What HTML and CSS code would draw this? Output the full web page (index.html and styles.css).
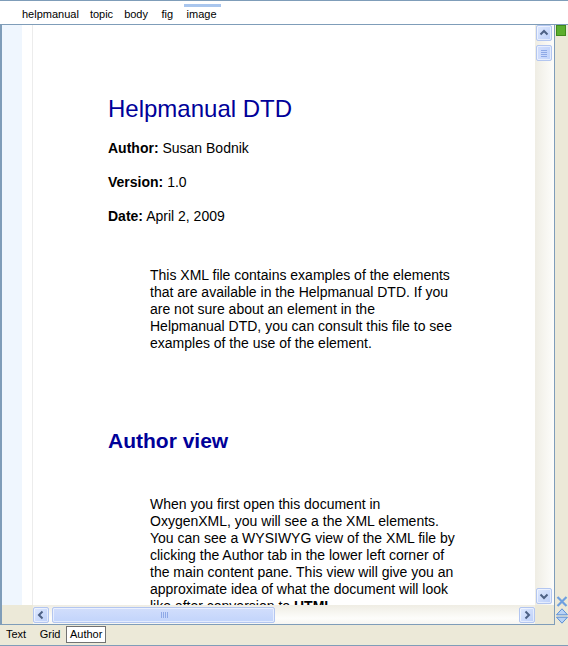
FILE: index.html
```
<!DOCTYPE html>
<html>
<head>
<meta charset="utf-8">
<link rel="stylesheet" href="styles.css">
</head>
<body>
<div class="app">
  <nav class="crumbs">
    <span class="crumb">helpmanual</span>
    <span class="crumb">topic</span>
    <span class="crumb">body</span>
    <span class="crumb shifted">fig</span>
    <span class="crumb shifted active">image</span>
  </nav>
  <div class="workspace">
    <div class="frame">
      <div class="viewport-row">
        <div class="gutter"></div>
        <div class="margin"></div>
        <div class="doc">
          <h1 class="title">Helpmanual DTD</h1>
          <p class="meta"><b>Author:</b> Susan Bodnik</p>
          <p class="meta"><b>Version:</b> 1.0</p>
          <p class="meta"><b>Date:</b> April 2, 2009</p>
          <p class="para first">This XML file contains examples of the elements<br>that are available in the Helpmanual DTD. If you<br>are not sure about an element in the<br>Helpmanual DTD, you can consult this file to see<br>examples of the use of the element.</p>
          <h2 class="section">Author view</h2>
          <p class="para second">When you first open this document in<br>OxygenXML, you will see a the XML elements.<br>You can see a WYSIWYG view of the XML file by<br>clicking the Author tab in the lower left corner of<br>the main content pane. This view will give you an<br>approximate idea of what the document will look<br>like after conversion to <b>HTML</b>.</p>
        </div>
        <div class="vscroll">
          <div class="sb-btn">
            <svg width="14" height="14" viewBox="0 0 14 14"><path d="M3.5 8.5 L7 5 L10.5 8.5" fill="none" stroke="#4d6185" stroke-width="2"/></svg>
          </div>
          <div class="vthumb">
            <svg width="14" height="14" viewBox="0 0 14 14"><path d="M4 4.5h6M4 6.5h6M4 8.5h6M4 10.5h6" stroke="#8fa9e6" stroke-width="1"/></svg>
          </div>
          <div class="vtrack-fill"></div>
          <div class="sb-btn">
            <svg width="14" height="14" viewBox="0 0 14 14"><path d="M3.5 5.5 L7 9 L10.5 5.5" fill="none" stroke="#4d6185" stroke-width="2"/></svg>
          </div>
        </div>
      </div>
      <div class="hscroll-row">
        <div class="corner-left"></div>
        <div class="hscroll">
          <div class="sb-btn">
            <svg width="14" height="14" viewBox="0 0 14 14"><path d="M8.5 3.5 L5 7 L8.5 10.5" fill="none" stroke="#4d6185" stroke-width="2"/></svg>
          </div>
          <div class="hthumb">
            <svg width="14" height="14" viewBox="0 0 14 14"><path d="M4.5 4v6M6.5 4v6M8.5 4v6M10.5 4v6" stroke="#8fa9e6" stroke-width="1"/></svg>
          </div>
          <div class="htrack-fill"></div>
          <div class="sb-btn">
            <svg width="14" height="14" viewBox="0 0 14 14"><path d="M5.5 3.5 L9 7 L5.5 10.5" fill="none" stroke="#4d6185" stroke-width="2"/></svg>
          </div>
        </div>
        <div class="corner"></div>
      </div>
    </div>
    <aside class="sidebar">
      <div class="status-ok"></div>
      <div class="side-tools">
        <svg class="close-icon" width="12" height="11" viewBox="0 0 12 11"><path d="M1.5 1 L10.5 10 M10.5 1 L1.5 10" stroke="#6fa0e0" stroke-width="2.2"/></svg>
        <svg class="nav-icon" width="12" height="16" viewBox="0 0 12 16"><path d="M6 0.8 L11.5 6.8 H0.5 Z" fill="#b9d3f5" stroke="#5b8fd6" stroke-width="1"/><path d="M6 15.2 L11.5 9.2 H0.5 Z" fill="#b9d3f5" stroke="#5b8fd6" stroke-width="1"/></svg>
      </div>
    </aside>
  </div>
  <div class="tabs">
    <span class="tab">Text</span>
    <span class="tab grid">Grid</span>
    <span class="tab active">Author</span>
  </div>
</div>
</body>
</html>
```

FILE: styles.css
```
* { box-sizing: border-box; }
html, body { margin: 0; padding: 0; }
body {
  width: 568px;
  height: 646px;
  overflow: hidden;
  background: #ece9d8;
  font-family: "Liberation Sans", Arial, sans-serif;
}
.app {
  width: 568px;
  height: 646px;
  display: flex;
  flex-direction: column;
}

/* breadcrumb bar */
.crumbs {
  height: 25px;
  flex: none;
  background: #fff;
  border-top: 1px solid #7f9db9;
  border-bottom: 1px solid #7f9db9;
  display: flex;
  align-items: flex-start;
  gap: 11px;
  padding-left: 22px;
  font-size: 11px;
  line-height: 13px;
  color: #000;
}
.crumb {
  position: relative;
  padding-top: 7px;
}
.crumb.shifted { margin-left: 2.5px; }
.crumb.active::before {
  content: "";
  position: absolute;
  top: 3px;
  left: -3px;
  right: -4px;
  height: 3px;
  background: #a9c6ee;
}

/* workspace */
.workspace {
  height: 600px;
  flex: none;
  display: flex;
}
.frame {
  width: 555px;
  flex: none;
  display: flex;
  flex-direction: column;
  border-left: 2px solid #7f9db9;
  border-right: 1px solid #7f9db9;
  border-bottom: 1px solid #7f9db9;
}
.viewport-row {
  height: 580px;
  flex: none;
  display: flex;
  background: #fff;
}
.gutter {
  width: 20px;
  flex: none;
  background: #eff6fe;
}
.margin {
  width: 11px;
  flex: none;
  background: #fff;
  border-right: 1px solid #ececec;
}
.doc {
  flex: 1;
  overflow: hidden;
  padding: 70px 0 0 75px;
  color: #000;
  font-size: 14px;
  line-height: 17px;
}
.title {
  margin: 0;
  font-size: 24px;
  line-height: 28px;
  font-weight: normal;
  color: #000099;
}
.meta {
  margin: 17px 0 0;
}
.meta + .meta { margin-top: 17px; }
.para {
  width: 330px;
  margin: 0 0 0 42px;
}
.para.first { margin-top: 42px; }
.section {
  margin: 77px 0 0;
  font-size: 21px;
  line-height: 24px;
  font-weight: bold;
  color: #000099;
}
.para.second { margin-top: 43px; }

/* scrollbars */
.sb-btn {
  width: 16px;
  height: 16px;
  flex: none;
  display: flex;
  align-items: center;
  justify-content: center;
  border: 1px solid #b3c6f0;
  border-radius: 2px;
  background: linear-gradient(135deg, #dfe9fe, #bccff9);
  box-shadow: inset 0 0 0 1px rgba(255,255,255,0.55);
}
.sb-btn svg { display: block; }
.vscroll {
  width: 19px;
  flex: none;
  display: flex;
  flex-direction: column;
  align-items: flex-start;
  padding: 0 0 1px 1px;
  background: linear-gradient(to right, #efede4, #fdfdfb);
}
.vthumb {
  width: 16px;
  height: 16px;
  margin-top: 4px;
  display: flex;
  align-items: center;
  justify-content: center;
  border: 1px solid #b3c6f0;
  border-radius: 2px;
  background: linear-gradient(to right, #d2defc, #c2d4fb);
  box-shadow: inset 0 0 0 1px rgba(255,255,255,0.55);
}
.vtrack-fill { flex: 1; }
.hscroll-row {
  height: 19px;
  flex: none;
  display: flex;
}
.corner-left {
  width: 31px;
  flex: none;
  background: #ece9d8;
}
.corner {
  width: 19px;
  flex: none;
  background: #ece9d8;
}
.hscroll {
  flex: 1;
  display: flex;
  align-items: flex-start;
  padding-top: 2px;
  background: linear-gradient(#efede4, #fdfdfb 70%, #f7f6f2);
}
.hthumb {
  width: 223px;
  height: 16px;
  margin-left: 3px;
  display: flex;
  align-items: center;
  justify-content: center;
  border: 1px solid #b3c6f0;
  border-radius: 2px;
  background: linear-gradient(#d2defc, #c2d4fb);
  box-shadow: inset 0 0 0 1px rgba(255,255,255,0.55);
}
.htrack-fill { flex: 1; }

/* right sidebar */
.sidebar {
  width: 13px;
  flex: none;
  display: flex;
  flex-direction: column;
  justify-content: space-between;
  padding: 0 0 1px 1px;
  background: #ece9d8;
}
.status-ok {
  width: 10px;
  height: 11px;
  background: #5cae2e;
  border: 1px solid #3f8a1c;
}
.side-tools {
  display: flex;
  flex-direction: column;
  gap: 1px;
}
.side-tools svg { display: block; }

/* bottom tabs */
.tabs {
  height: 21px;
  flex: none;
  display: flex;
  align-items: flex-start;
  gap: 3.5px;
  padding: 1px 0 0 2px;
  border-bottom: 1px solid #7f9db9;
  margin-bottom: 1px;
  font-size: 11px;
  line-height: 13px;
  color: #000;
}
.tab {
  padding: 1px 3px 1px 3px;
  border: 1px solid transparent;
}
.tab.grid { margin-left: 2px; margin-right: -2px; }
.tab.active {
  background: #fff;
  border-color: #727272;
}
```
